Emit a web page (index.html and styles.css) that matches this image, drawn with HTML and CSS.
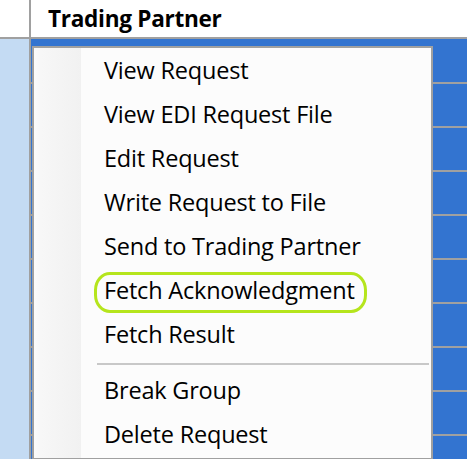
FILE: index.html
```html
<!DOCTYPE html>
<html>
<head>
<meta charset="utf-8">
<link rel="stylesheet" href="styles.css">
</head>
<body>
<div class="screen">
  <div class="header">
    <div class="hcell-first"></div>
    <div class="hcell">Trading Partner</div>
  </div>
  <div class="grid">
    <div class="col-left"></div>
    <div class="col-main">
      <div class="row"></div><div class="row"></div><div class="row"></div>
      <div class="row"></div><div class="row"></div><div class="row"></div>
      <div class="row"></div><div class="row"></div><div class="row"></div>
      <div class="row"></div>
    </div>
  </div>
  <div class="menu">
    <div class="gutter"></div>
    <div class="items">
      <div class="item">View Request</div>
      <div class="item">View EDI Request File</div>
      <div class="item">Edit Request</div>
      <div class="item">Write Request to File</div>
      <div class="item">Send to Trading Partner</div>
      <div class="item item-marked"><span class="mark"></span>Fetch Acknowledgment</div>
      <div class="item">Fetch Result</div>
      <div class="sep"></div>
      <div class="item">Break Group</div>
      <div class="item">Delete Request</div>
    </div>
  </div>
</div>
</body>
</html>
```
FILE: styles.css
```css
html, body {
  margin: 0;
  padding: 0;
}
body {
  width: 467px;
  height: 459px;
  overflow: hidden;
  background: #ffffff;
  font-family: "Open Sans", "Noto Sans", sans-serif;
  color: #000;
}
.screen {
  position: relative;
  width: 467px;
  height: 459px;
  overflow: hidden;
}
.header {
  display: flex;
  height: 37px;
  border-top: 1px solid #f0f0f0;
  border-bottom: 2px solid #a0a0a0;
  box-sizing: content-box;
  background: #fff;
  margin-top: -1px;
}
.hcell-first {
  width: 29px;
  border-right: 2px solid #a0a0a0;
  flex: none;
}
.hcell {
  flex: 1;
  padding-left: 17px;
  font-weight: 700;
  font-size: 22.6px;
  line-height: 37px;
  letter-spacing: -0.3px;
}
.grid {
  display: flex;
  height: 420px;
}
.col-left {
  width: 29px;
  flex: none;
  background: #c4dbf3;
  border-right: 2px solid #a0a0a0;
}
.col-main {
  flex: 1;
  background: #3374d0;
  padding-top: 1px;
}
.row {
  height: 44px;
  box-sizing: border-box;
  border-bottom: 2px solid #a0a0a0;
}
.menu {
  position: absolute;
  left: 32px;
  top: 46px;
  width: 401px;
  height: 414px;
  box-sizing: border-box;
  border: 2px solid #a0a0a0;
  background: #fcfcfc;
  display: flex;
}
.gutter {
  position: absolute;
  left: 0;
  top: 0;
  bottom: 0;
  width: 47px;
  background: linear-gradient(to right, #fbfbfb 0%, #f7f7f7 15%, #f1f1f1 100%);
}
.items {
  position: relative;
  flex: 1;
  padding-top: 2px;
}
.item {
  position: relative;
  height: 44px;
  box-sizing: border-box;
  line-height: 40px;
  padding-bottom: 4px;
  padding-left: 70px;
  font-size: 23.5px;
  letter-spacing: -0.2px;
  white-space: nowrap;
}
.sep {
  height: 12px;
  display: flex;
  align-items: center;
  padding-left: 63px;
  padding-right: 2px;
}
.sep::before {
  content: "";
  flex: 1;
  height: 2px;
  background: #c8c8c8;
}
.mark {
  position: absolute;
  left: 60px;
  top: 2px;
  width: 273px;
  height: 41px;
  box-sizing: border-box;
  border: 3px solid #b5e51d;
  border-radius: 16px / 18px;
}
```
